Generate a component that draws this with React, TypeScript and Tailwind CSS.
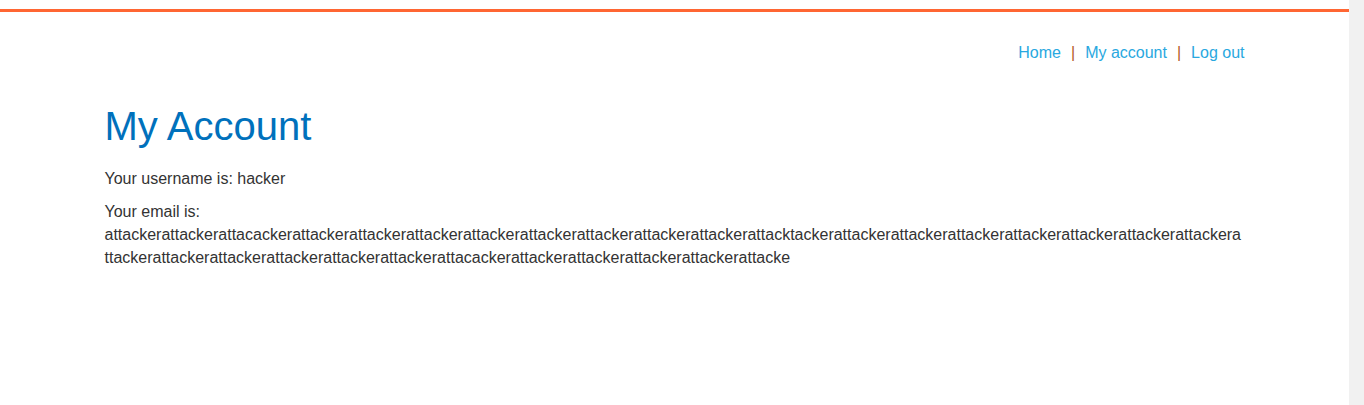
import React from 'react';

const email =
  'attacker'.repeat(2) +
  'attacacker' +
  'attacker'.repeat(8) +
  'attacktacker' +
  'attacker'.repeat(6) +
  'attackera' +
  'ttacker' +
  'attacker'.repeat(5) +
  'attacacker' +
  'attacker'.repeat(4) +
  'attacke';

const NavLink: React.FC<{ label: string }> = ({ label }) => (
  <a href="#" className="text-[#29a8e0] hover:underline">
    {label}
  </a>
);

const Separator: React.FC = () => <span className="mx-[10px] text-[#b35c1e]">|</span>;

export default function App() {
  return (
    <div className="flex h-[405px] bg-white font-['Liberation_Sans',Arial,sans-serif] text-[16px] text-[#333333]">
      <div className="flex-1 pt-[9px]">
        <div className="h-[3px] bg-[#ff6633]" />
        <div className="mx-auto w-[1140px]">
          {/* Header navigation */}
          <div className="flex justify-end pt-[29px] leading-[23px]">
            <NavLink label="Home" />
            <Separator />
            <NavLink label="My account" />
            <Separator />
            <NavLink label="Log out" />
          </div>

          {/* Account details */}
          <h1 className="mt-[38px] mb-[17px] text-[40px] leading-[48px] text-[#0071bc]">My Account</h1>
          <p className="mb-[10px] leading-[23px]">Your username is: hacker</p>
          <p className="leading-[23px] break-words">
            Your email is: <span>{email}</span>
          </p>
        </div>
      </div>
      <div className="w-[15px] bg-[#f1f1f1]" />
    </div>
  );
}
